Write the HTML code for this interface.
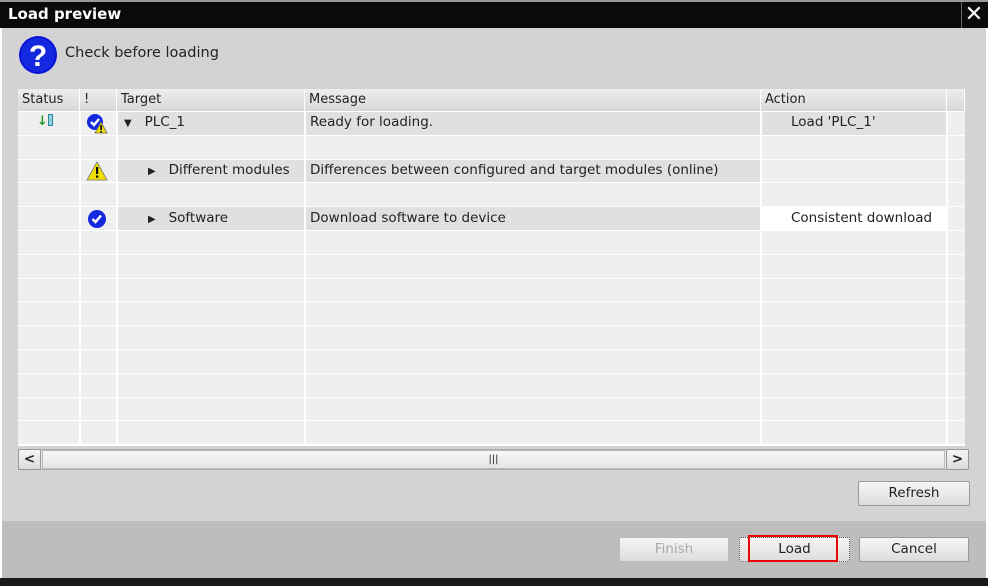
<!DOCTYPE html>
<html><head><style>
*{margin:0;padding:0;box-sizing:border-box}
body{width:988px;height:586px;background:#fff;font-family:"DejaVu Sans","Liberation Sans",sans-serif;font-size:13.5px;color:#222;position:relative;overflow:hidden}
.a{position:absolute}
.title{left:0;top:0;width:988px;height:28px;background:#0a0a0a;border-top:2px solid #999}
.title span{position:absolute;left:8px;top:3px;color:#fff;font-weight:bold;font-size:15px}
.body{left:2px;top:28px;width:984px;height:494px;background:#d3d3d3}
.foot{left:2px;top:521px;width:984px;height:57px;background:#bdbdbd}
.bot{left:0;top:578px;width:988px;height:8px;background:#1a1a1a}
.hdr{top:89px;height:22px;background:linear-gradient(#eee,#d8d8d8);border-right:1px solid #fff;padding:3px 4px;font-size:13px}
.cell{background:#efefef}
.g{background:#e0e0e0}
.btn{height:25px;border:1px solid #999;border-radius:2px;background:linear-gradient(#f6f6f6,#dcdcdc);text-align:center;line-height:23px;font-size:13.5px}
</style></head><body>
<div class="a title"><span>Load preview</span>
<div class="a" style="left:961px;top:0;width:25px;height:26px;border-left:1px solid #666;color:#fff;font-size:22px;font-weight:bold;text-align:center;line-height:26px">✕</div></div>
<div class="a body"></div>
<div class="a foot"></div>
<div class="a bot"></div>
<svg class="a" style="left:18px;top:35px" width="40" height="40"><circle cx="20" cy="20" r="19" fill="#0a14d8"/><circle cx="20" cy="20" r="17" fill="#1428e0"/><text x="20" y="31" font-size="30" font-weight="bold" fill="#fff" text-anchor="middle" font-family="Liberation Sans">?</text></svg>
<div class="a" style="left:65px;top:45px;font-size:14.5px">Check before loading</div>
<div class="a" style="left:18px;top:89px;width:947px;height:357px;background:#fff"></div>
<div class="a hdr" style="left:18px;width:62px">Status</div>
<div class="a hdr" style="left:80px;width:37px">!</div>
<div class="a hdr" style="left:117px;width:188px">Target</div>
<div class="a hdr" style="left:305px;width:456px">Message</div>
<div class="a hdr" style="left:761px;width:186px">Action</div>
<div class="a hdr" style="left:947px;width:18px"></div>
<div id="rows"></div>
<script>
var h='';var cols=[[18,61],[81,35],[118,186],[306,454],[762,184],[948,17]];
for(var r=0;r<14;r++){var y=Math.round(112+r*23.8);var y2=Math.round(112+(r+1)*23.8);if(y2>446)y2=447;for(var c=0;c<6;c++){var g=(r==0&&c>=2&&c<=4)||((r==2||r==4)&&c>=2&&c<=3);var w=(r==4&&c==4);
h+='<div class="a cell'+(g?' g':'')+'" style="left:'+cols[c][0]+'px;top:'+y+'px;height:'+(y2-y-1)+'px;width:'+cols[c][1]+'px;'+(w?'background:#fff':'')+'"></div>';}}
document.getElementById('rows').innerHTML=h;
</script>
<div class="a" style="left:37px;top:114px;color:#2a9a2a;font-weight:bold;font-size:13px">↓<span style="display:inline-block;width:5px;height:12px;border:1px solid #2a8a9a;background:#8fd0e0;vertical-align:-1px"></span></div>
<svg class="a" style="left:86px;top:113px" width="22" height="22"><circle cx="9" cy="9" r="8" fill="#1428e0"/><path d="M5 9l3 3 5-6" stroke="#fff" stroke-width="2.5" fill="none"/><path d="M15 9l6 11h-12z" fill="#f0e000" stroke="#666" stroke-width=".8"/><rect x="14.3" y="12" width="1.6" height="5" fill="#000"/><rect x="14.3" y="18" width="1.6" height="1.5" fill="#000"/></svg>
<div class="a" style="left:124px;top:114px"><span style="font-size:10px">▼</span>&nbsp;&nbsp;&nbsp;PLC_1</div>
<div class="a" style="left:310px;top:114px">Ready for loading.</div>
<div class="a" style="left:791px;top:114px">Load 'PLC_1'</div>
<svg class="a" style="left:86px;top:161px" width="22" height="20"><path d="M11 1l10 18h-20z" fill="#f0e000" stroke="#777" stroke-width=".8"/><rect x="10" y="6" width="2.2" height="7" fill="#000"/><rect x="10" y="14.5" width="2.2" height="2.2" fill="#000"/></svg>
<div class="a" style="left:148px;top:162px"><span style="font-size:10px">▶</span>&nbsp;&nbsp;&nbsp;Different modules</div>
<div class="a" style="left:310px;top:162px">Differences between configured and target modules (online)</div>
<svg class="a" style="left:87px;top:209px" width="20" height="20"><circle cx="10" cy="10" r="9" fill="#1428e0"/><path d="M5.5 10l3 3 5.5-6.5" stroke="#fff" stroke-width="2.5" fill="none"/></svg>
<div class="a" style="left:148px;top:210px"><span style="font-size:10px">▶</span>&nbsp;&nbsp;&nbsp;Software</div>
<div class="a" style="left:310px;top:210px">Download software to device</div>
<div class="a" style="left:791px;top:210px">Consistent download</div>
<div class="a" style="left:18px;top:449px;width:947px;height:21px;background:#e8e8e8;border:1px solid #aaa"></div>
<div class="a btn" style="left:18px;top:449px;width:23px;height:21px;line-height:19px;font-weight:bold">&lt;</div>
<div class="a" style="left:42px;top:450px;width:903px;height:19px;background:linear-gradient(#f8f8f8,#e4e4e4);border:1px solid #bbb;text-align:center;font-size:10px;line-height:17px">|||</div>
<div class="a btn" style="left:946px;top:449px;width:23px;height:21px;line-height:19px;font-weight:bold">&gt;</div>
<div class="a btn" style="left:858px;top:481px;width:112px">Refresh</div>
<div class="a btn" style="left:619px;top:537px;width:110px;color:#aaa;border-color:#bbb">Finish</div>
<div class="a btn" style="left:739px;top:537px;width:111px;border:1px dotted #555">Load</div>
<div class="a" style="left:748px;top:535px;width:90px;height:27px;border:2px solid #e00"></div>
<div class="a btn" style="left:859px;top:537px;width:110px">Cancel</div>
</body></html>
